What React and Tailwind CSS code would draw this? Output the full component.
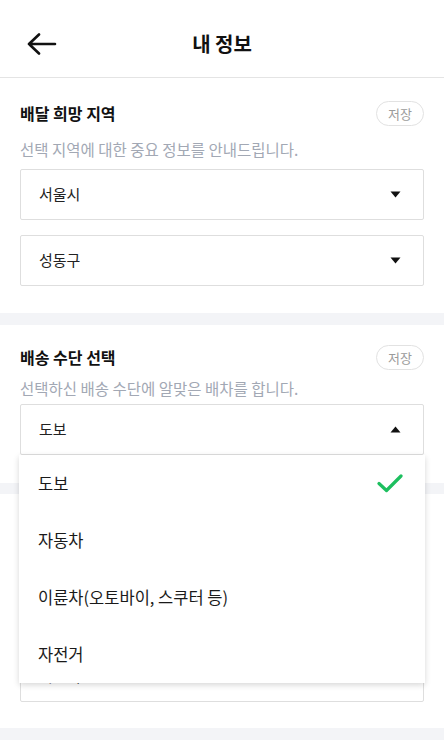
import React, { useState } from "react";

const font = { fontFamily: '"Noto Sans CJK KR", "Noto Sans", sans-serif' };

const BackArrow = () => (
  <svg width="30" height="22" viewBox="0 0 30 22" fill="none">
    <path d="M2 11H28M12 1.5L2 11L12 20.5" stroke="#111" strokeWidth="2.6" strokeLinecap="round" strokeLinejoin="round" />
  </svg>
);

const Caret = ({ up }) => (
  <svg width="11" height="7" viewBox="0 0 11 7">
    {up ? <path d="M0.5 6.5L5.5 0.5L10.5 6.5Z" fill="#111" /> : <path d="M0.5 0.5L5.5 6.5L10.5 0.5Z" fill="#111" />}
  </svg>
);

const Check = () => (
  <svg width="26" height="19" viewBox="0 0 26 19" fill="none">
    <path d="M2 9.5L9.5 16.5L24 2" stroke="#1dbf5f" strokeWidth="3.2" strokeLinecap="round" strokeLinejoin="round" />
  </svg>
);

const SaveButton = () => (
  <button className="h-[25px] px-[11px] rounded-full border border-[#e2e2e2] text-[13px] text-[#9b9b9b] leading-none">
    저장
  </button>
);

const SectionHead = ({ title, desc, gap = "mt-[14px]" }) => (
  <>
    <div className="flex items-center justify-between h-6">
      <h2 className="text-[16px] font-bold text-[#111]">{title}</h2>
      <SaveButton />
    </div>
    <p className={`${gap} text-[15.5px] leading-5 text-[#a2a8b4]`}>{desc}</p>
  </>
);

const Select = ({ value, open, className = "" }) => (
  <div className={`h-[51px] flex items-center justify-between pl-[18px] pr-[22px] border border-[#dedede] rounded-[2px] bg-white ${className}`}>
    <span className="text-[15px] text-[#222]">{value}</span>
    <Caret up={open} />
  </div>
);

const options = ["도보", "자동차", "이륜차(오토바이, 스쿠터 등)", "자전거"];

export default function App() {
  const [selected] = useState("도보");

  return (
    <div className="w-[444px] h-[740px] overflow-hidden bg-[#f3f4f7]" style={font}>
      {/* Header */}
      <header className="h-[78px] pt-[11px] bg-white border-b border-[#e4e4e4] flex items-center px-[27px] relative">
        <BackArrow />
        <h1 className="absolute left-0 right-0 text-center text-[20px] font-bold text-[#111] pointer-events-none">내 정보</h1>
      </header>

      {/* 배달 희망 지역 */}
      <section className="bg-white px-5 pt-[23px] pb-[27px]">
        <SectionHead title="배달 희망 지역" desc="선택 지역에 대한 중요 정보를 안내드립니다." />
        <Select value="서울시" className="mt-[10px]" />
        <Select value="성동구" className="mt-[15px]" />
      </section>

      {/* 배송 수단 선택 */}
      <section className="bg-white px-5 pt-5 pb-[28px] mt-3 relative z-10">
        <SectionHead title="배송 수단 선택" desc="선택하신 배송 수단에 알맞은 배차를 합니다." gap="mt-[9px]" />
        <div className="relative mt-[6px]">
          <Select value={selected} open className="h-[50px]" />
          <ul className="absolute top-full -left-px -right-px bg-white shadow-[0_2px_6px_rgba(0,0,0,0.16)]">
            {options.map((o) => (
              <li key={o} className="h-[57px] flex items-center justify-between pl-[19px] pr-[22px]">
                <span className="text-[16.5px] text-[#1a1a1a]">{o}</span>
                {o === selected && <Check />}
              </li>
            ))}
          </ul>
        </div>
      </section>

      {/* covered by the open dropdown */}
      <section className="bg-white px-5 pt-[23px] pb-[26px] mt-[11px]">
        <div className="invisible" aria-hidden="true">
          <SectionHead title="운행 가능 시간" desc="선택하신 시간에 맞춰 배차를 합니다." />
          <Select value="평일" className="mt-[10px]" />
        </div>
        <Select value="시간대" className="mt-[15px]" />
      </section>
    </div>
  );
}
